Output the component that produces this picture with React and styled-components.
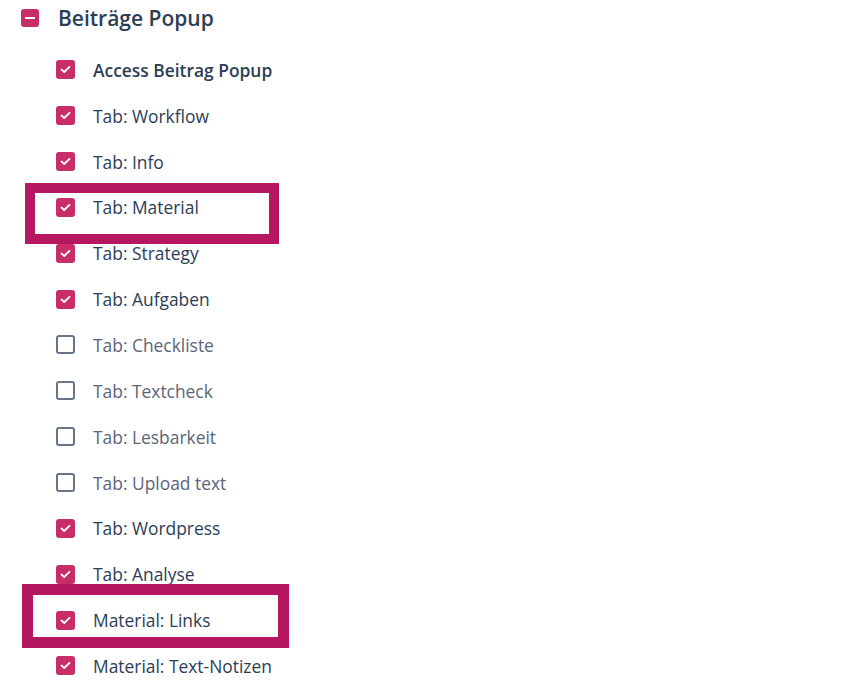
import React from 'react'
import styled, { createGlobalStyle } from 'styled-components'

const GlobalStyle = createGlobalStyle`
  body {
    margin: 0;
    background: #ffffff;
    font-family: "Open Sans", "Noto Sans", sans-serif;
  }
`

const Page = styled.div`
  position: relative;
  width: 862px;
  height: 700px;
  overflow: hidden;
  padding: 9px 0 0 21px;
  box-sizing: border-box;
`

const Header = styled.div`
  display: flex;
  align-items: center;
  gap: 19px;
  height: 18px;
`

const Collapse = styled.span`
  width: 18px;
  height: 18px;
  border-radius: 3px;
  background: #c72d66;
  display: flex;
  align-items: center;
  justify-content: center;
  &::after {
    content: '';
    width: 10px;
    height: 2px;
    background: #fff;
  }
`

const Title = styled.h2`
  margin: 0;
  font-size: 21px;
  font-weight: 600;
  color: #2c3e56;
  line-height: 18px;
`

const List = styled.ul`
  list-style: none;
  margin: 20px 0 0 35px;
  padding: 0;
`

const Row = styled.li`
  display: flex;
  align-items: center;
  gap: 18px;
  height: 45.85px;
  font-size: 17.4px;
  color: ${p => (p.checked ? '#2c3e56' : '#5a6579')};
  font-weight: ${p => (p.strong ? 600 : 400)};
`

const Box = styled.span`
  width: 19px;
  height: 19px;
  box-sizing: border-box;
  border-radius: 3px;
  flex-shrink: 0;
  display: flex;
  align-items: center;
  justify-content: center;
  background: ${p => (p.checked ? '#c72d66' : '#fff')};
  border: ${p => (p.checked ? 'none' : '2px solid #687488')};
`

const Marker = styled.div`
  position: absolute;
  box-sizing: border-box;
  border: ${p => p.thick}px solid #b51760;
`

const items = [
  { label: 'Access Beitrag Popup', checked: true, strong: true },
  { label: 'Tab: Workflow', checked: true },
  { label: 'Tab: Info', checked: true },
  { label: 'Tab: Material', checked: true },
  { label: 'Tab: Strategy', checked: true },
  { label: 'Tab: Aufgaben', checked: true },
  { label: 'Tab: Checkliste', checked: false },
  { label: 'Tab: Textcheck', checked: false },
  { label: 'Tab: Lesbarkeit', checked: false },
  { label: 'Tab: Upload text', checked: false },
  { label: 'Tab: Wordpress', checked: true },
  { label: 'Tab: Analyse', checked: true },
  { label: 'Material: Links', checked: true },
  { label: 'Material: Text-Notizen', checked: true },
]

function Check() {
  return (
    <svg width="11" height="9" viewBox="0 0 11 9">
      <polyline points="1.5,4.5 4.2,7 9.5,1.8" fill="none" stroke="#fff" strokeWidth="1.8" strokeLinecap="round" strokeLinejoin="round" />
    </svg>
  )
}

export default function App() {
  return (
    <Page>
      <GlobalStyle />
      <Header>
        <Collapse />
        <Title>Beiträge Popup</Title>
      </Header>
      <List>
        {items.map((it, idx) => (
          <Row key={idx} checked={it.checked} strong={it.strong}>
            <Box checked={it.checked}>{it.checked && <Check />}</Box>
            {it.label}
          </Row>
        ))}
      </List>
      {/* annotation frames drawn over the list */}
      <Marker thick={10} style={{ left: 25, top: 183, width: 254, height: 61 }} />
      <Marker thick={11} style={{ left: 22, top: 584, width: 267, height: 64 }} />
    </Page>
  )
}
